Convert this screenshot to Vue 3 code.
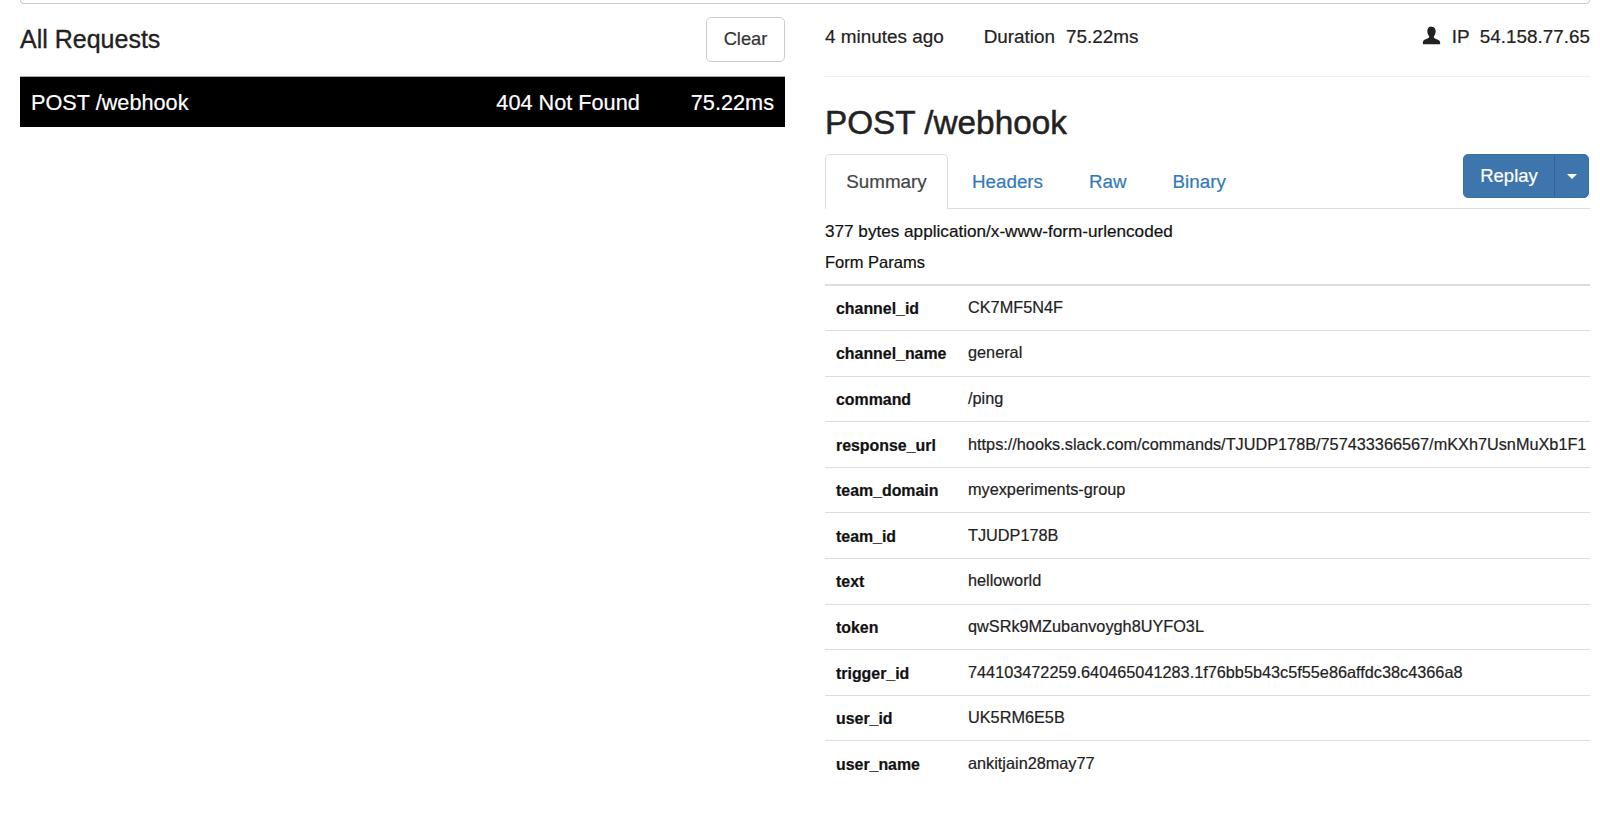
<script setup>
const params = [
  ['channel_id', 'CK7MF5N4F'],
  ['channel_name', 'general'],
  ['command', '/ping'],
  ['response_url', 'https://hooks.slack.com/commands/TJUDP178B/757433366567/mKXh7UsnMuXb1F1'],
  ['team_domain', 'myexperiments-group'],
  ['team_id', 'TJUDP178B'],
  ['text', 'helloworld'],
  ['token', 'qwSRk9MZubanvoygh8UYFO3L'],
  ['trigger_id', '744103472259.640465041283.1f76bb5b43c5f55e86affdc38c4366a8'],
  ['user_id', 'UK5RM6E5B'],
  ['user_name', 'ankitjain28may77'],
]
const tabs = ['Headers', 'Raw', 'Binary']
</script>

<template>
  <div class="page">
    <div class="topbox"></div>
    <div class="columns">
      <section class="left">
        <div class="left-head">
          <h4>All Requests</h4>
          <button class="clear">Clear</button>
        </div>
        <div class="req">
          <span class="req-path">POST /webhook</span>
          <span class="req-status">404 Not Found</span>
          <span class="req-time">75.22ms</span>
        </div>
      </section>
      <section class="right">
        <div class="meta">
          <span class="ago">4 minutes ago</span>
          <span class="dur">Duration<span class="val">75.22ms</span></span>
          <span class="ip">
            <svg class="user" viewBox="0 0 20 20" aria-hidden="true">
              <path d="M10 0.6c-2.9 0-4.4 2.1-4.4 4.9 0 1.9.7 3.7 1.7 4.9.4.6.4 1.2.1 1.8-.5 1-2.4 1.4-4.2 2.1C1.7 15.1.9 16 .9 17.6v1.5h18.2v-1.5c0-1.6-.8-2.5-2.3-3.2-1.8-.7-3.7-1.1-4.2-2.1-.3-.6-.3-1.2.1-1.8 1-1.2 1.7-3 1.7-4.9 0-2.8-1.5-4.9-4.4-4.9z" fill="#222"/>
            </svg>
            IP<span class="val ip-val">54.158.77.65</span>
          </span>
        </div>
        <hr class="rule" />
        <h3 class="title">POST /webhook</h3>
        <div class="tabbar">
          <span class="tab active">Summary</span>
          <a v-for="t in tabs" :key="t" class="tab">{{ t }}</a>
          <div class="replay">
            <span class="replay-main">Replay</span>
            <span class="replay-caret"><i></i></span>
          </div>
        </div>
        <p class="size">377 bytes application/x-www-form-urlencoded</p>
        <p class="form">Form Params</p>
        <table class="params">
          <tbody>
            <tr v-for="p in params" :key="p[0]">
              <th>{{ p[0] }}</th>
              <td>{{ p[1] }}</td>
            </tr>
          </tbody>
        </table>
      </section>
    </div>
  </div>
</template>

<style>
html, body { margin: 0; background: #fff; overflow: hidden; }
</style>

<style scoped>
.page {
  width: 1600px;
  height: 818px;
  box-sizing: border-box;
  padding: 0 10px 0 20px;
  overflow: hidden;
  font-family: "Liberation Sans", Arial, sans-serif;
  color: #222;
  -webkit-text-stroke: 0.2px currentColor;
}
.topbox {
  height: 3px;
  border: 1px solid #ccc;
  border-top: 0;
  border-radius: 0 0 7px 7px;
}
.columns { display: flex; gap: 40px; }
.left { width: 765px; flex: none; }
.left-head {
  display: flex;
  justify-content: space-between;
  align-items: center;
  padding-top: 13px;
}
.left-head h4 { margin: 0; font-size: 25px; font-weight: 400; color: #222; -webkit-text-stroke: 0.35px currentColor; }
.clear {
  width: 79px;
  height: 45px;
  padding: 0 0 2px;
  background: #fff;
  border: 1px solid #ccc;
  border-radius: 5px;
  font: inherit;
  font-size: 18.3px;
  color: #333;
}
.req {
  margin-top: 14px;
  height: 51px;
  box-sizing: border-box;
  display: flex;
  align-items: center;
  background: #000;
  color: #fff;
  padding: 2px 11px 0 11px;
  font-size: 21.7px;
  border-top: 1px solid #aaa;
}
.req-path { flex: 1; }
.req-time { margin-left: 51px; }
.right { flex: 1; min-width: 0; }
.meta {
  display: flex;
  align-items: center;
  height: 40px;
  margin-top: 13px;
  font-size: 18.9px;
  color: #222;
}
.dur { margin-left: 40px; }
.val { margin-left: 11px; }
.ip-val { margin-left: 10px; }
.ip { margin-left: auto; display: flex; align-items: center; }
.user { width: 19px; height: 19px; margin-right: 11px; margin-top: -4px; }
.rule { margin: 19px 0 0; border: 0; border-top: 1px solid #eee; }
.title { margin: 26px 0 0; font-size: 33.3px; line-height: 40px; font-weight: 500; color: #222; -webkit-text-stroke: 0.5px currentColor; }
.tabbar {
  display: flex;
  align-items: flex-start;
  height: 55px;
  margin-top: 11px;
  box-sizing: border-box;
  border-bottom: 1px solid #ddd;
}
.tab {
  height: 55px;
  box-sizing: border-box;
  padding: 0 23px;
  display: flex;
  align-items: center;
  font-size: 18.8px;
  color: #337ab7;
}
.tab:nth-child(2) { padding-left: 24px; }
.tab.active {
  width: 123px;
  padding: 0;
  justify-content: center;
  color: #444;
  border: 1px solid #ddd;
  border-bottom: 0;
  border-radius: 5px 5px 0 0;
  background: #fff;
}
.replay {
  margin-left: auto;
  margin-right: 1px;
  display: flex;
  height: 44px;
  background: #3f75ad;
  color: #fff;
  border: 1px solid #3a6ea6;
  box-sizing: border-box;
  border-radius: 5px;
  font-size: 18.5px;
}
.replay-main { width: 90px; display: flex; align-items: center; justify-content: center; border-right: 1px solid #356494; }
.replay-caret { width: 33px; display: flex; align-items: center; justify-content: center; }
.replay-caret i {
  width: 0;
  height: 0;
  border-left: 5px solid transparent;
  border-right: 5px solid transparent;
  border-top: 5px solid #fff;
}
.size, .form { margin: 0; line-height: 30px; color: #111; height: 30px; }
.size { margin-top: 7px; font-size: 17.15px; }
.form { margin-top: 1px; margin-bottom: 7px; font-size: 16.5px; }
.params { border-collapse: collapse; width: 100%; table-layout: fixed; border-top: 2px solid #ddd; }
.params tr { height: 45.6px; border-bottom: 1px solid #ddd; }
.params tr:last-child { border-bottom: 0; }
.params th, .params td {
  padding: 0 11px;
  text-align: left;
  white-space: nowrap;
  overflow: hidden;
}
.params th { width: 110px; font-weight: 700; font-size: 15.9px; color: #111; padding-top: 2px; }
.params td { padding-bottom: 1px; font-size: 16.28px; color: #222; }
</style>
